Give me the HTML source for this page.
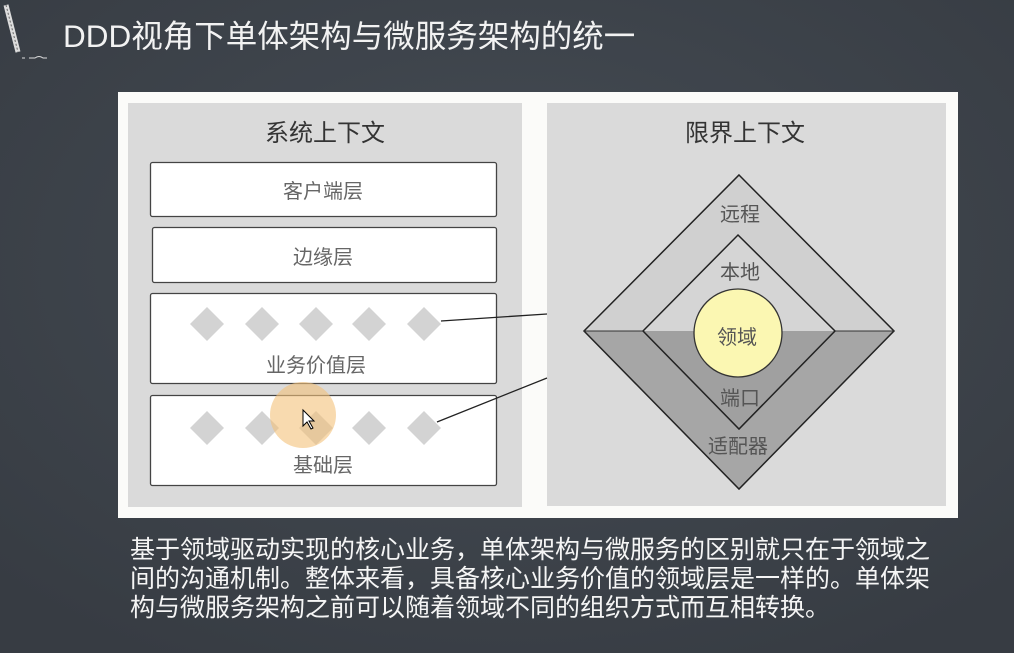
<!DOCTYPE html>
<html><head><meta charset="utf-8"><style>
html,body{margin:0;padding:0;width:1014px;height:653px;overflow:hidden;background:#3d434a;}
svg{display:block}
</style></head><body>
<svg width="1014" height="653" xmlns="http://www.w3.org/2000/svg" font-family="'Liberation Sans','Noto Sans CJK SC',sans-serif">
<defs><radialGradient id="bg" cx="50%" cy="40%" r="70%"><stop offset="0" stop-color="#454c54"/><stop offset="1" stop-color="#373c43"/></radialGradient></defs>
<rect width="1014" height="653" fill="url(#bg)"/>
<path d="M6 5 L18 52" stroke="#ddd" stroke-width="5" fill="none"/>
<path d="M6 5 L18 52" stroke="#666" stroke-width="1" stroke-dasharray="2 2" fill="none"/>
<path d="M22 58 h3 M29 58 h6 q4 -3 8 0 h4" stroke="#ddd" stroke-width="1" fill="none"/>
<text x="63" y="47" font-size="31.5" fill="#f2f2f2">DDD视角下单体架构与微服务架构的统一</text>
<rect x="118" y="92" width="840" height="426" fill="#fbfbf9"/>
<rect x="128" y="103" width="394" height="404" fill="#dadada"/>
<rect x="547" y="103" width="399" height="403" fill="#dadada"/>
<text x="325" y="141" font-size="24" fill="#333" text-anchor="middle">系统上下文</text>
<text x="745" y="141" font-size="24" fill="#333" text-anchor="middle">限界上下文</text>
<g fill="#fff" stroke="#444" stroke-width="1.3">
<rect x="150.5" y="162.5" width="346" height="54" rx="2"/>
<rect x="152.5" y="227.5" width="344" height="55" rx="2"/>
<rect x="150.5" y="293.5" width="346" height="90" rx="2"/>
<rect x="150.5" y="395.5" width="346" height="90" rx="2"/>
</g>
<g font-size="20" fill="#666" text-anchor="middle">
<text x="323" y="198">客户端层</text>
<text x="323" y="264">边缘层</text>
<text x="316" y="372">业务价值层</text>
<text x="323" y="472">基础层</text>
</g>
<g fill="#d3d3d3">
<path d="M207 307l17 17-17 17-17-17z"/><path d="M262 307l17 17-17 17-17-17z"/><path d="M316 307l17 17-17 17-17-17z"/><path d="M369 307l17 17-17 17-17-17z"/><path d="M424 307l17 17-17 17-17-17z"/>
<path d="M207 411l17 17-17 17-17-17z"/><path d="M262 411l17 17-17 17-17-17z"/><path d="M316 411l17 17-17 17-17-17z"/><path d="M369 411l17 17-17 17-17-17z"/><path d="M424 411l17 17-17 17-17-17z"/>
</g>
<circle cx="303" cy="415" r="33" fill="#f3c27a" opacity="0.6"/>
<path d="M303 410 l0 16 4-4 4 7 2-1-4-7 5 0z" fill="#fff" stroke="#000" stroke-width="1"/>
<path d="M441 321 L547 314 M437 422 L547 378" stroke="#222" stroke-width="1.3"/>
<path d="M584 331 L739 175 L894 331Z" fill="#d0d0d0"/>
<path d="M584 331 L894 331 L739 489Z" fill="#a6a6a6"/>
<path d="M739 175 L894 331 L739 489 L584 331Z" fill="none" stroke="#222" stroke-width="1.5"/>
<path d="M584 331 H894" stroke="#333" stroke-width="1"/>
<path d="M643 331 L738 235 L835 331Z" fill="#d5d5d5"/>
<path d="M643 331 L835 331 L739 429Z" fill="#a0a0a0"/>
<path d="M738 235 L835 331 L739 429 L643 331Z" fill="none" stroke="#222" stroke-width="1.5"/>
<circle cx="738" cy="333" r="44" fill="#fbf7b2" stroke="#333" stroke-width="1.3"/>
<g font-size="20" fill="#555" text-anchor="middle">
<text x="740" y="221">远程</text>
<text x="740" y="279">本地</text>
<text x="737" y="344">领域</text>
<text x="740" y="405">端口</text>
<text x="738" y="453">适配器</text>
</g>
<g font-size="25" fill="#f5f5f5">
<text x="130" y="558">基于领域驱动实现的核心业务，单体架构与微服务的区别就只在于领域之</text>
<text x="130" y="587">间的沟通机制。整体来看，具备核心业务价值的领域层是一样的。单体架</text>
<text x="130" y="616">构与微服务架构之前可以随着领域不同的组织方式而互相转换。</text>
</g>
</svg>
</body></html>
